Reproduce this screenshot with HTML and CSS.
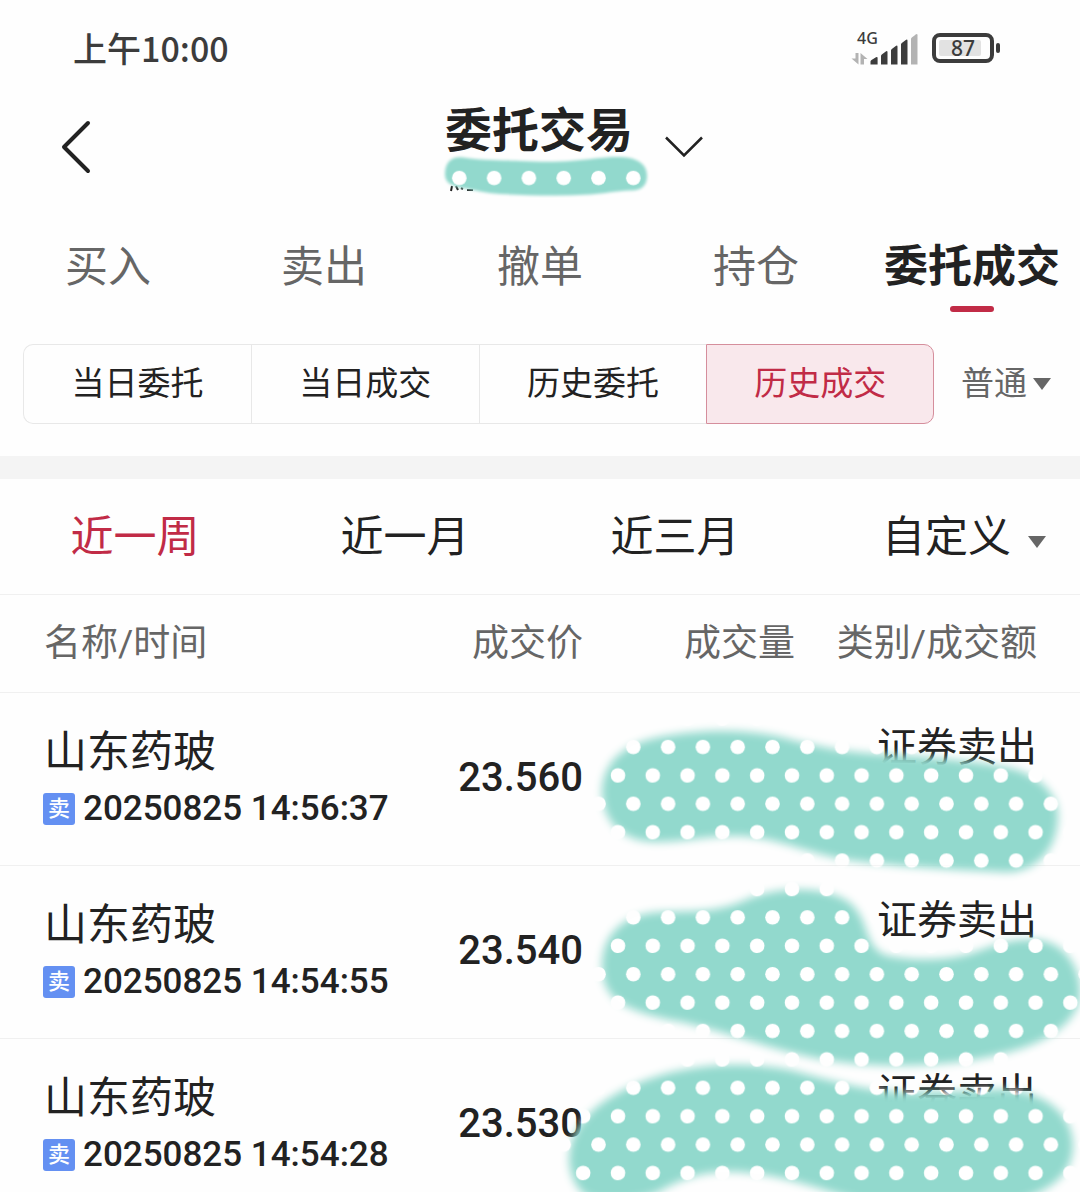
FILE: index.html
```html
<!DOCTYPE html>
<html lang="zh-CN">
<head>
<meta charset="utf-8">
<meta name="viewport" content="width=device-width, initial-scale=1">
<title>委托交易</title>
<link rel="stylesheet" href="styles.css">
</head>
<body>
<div class="status-bar">
  <span class="clock">上午10:00</span>
  <div class="status-icons">
    <svg class="signal" width="68" height="48" viewBox="851 23 68 48" aria-label="4G">
      <text class="network" x="857" y="43">4G</text>
      <path fill="#b3b3b3" d="M855.500 52h3v11.500l-7-6h4zM860.500 63.500v-11.500l7 6h-3.500v5.500z"/>
      <path fill="#3c3c3c" d="M870.500 60.500q0-1 1-1.600l4.500-2.700q1.600-.8 1.600.8v6.500h-7.100zM881 55q0-1 .8-1.600l4-3q1.700-.9 1.700.8v12.300h-6.500zM891 49.500q0-1 .8-1.600l4-3q1.700-.9 1.700.8v17.800h-6.500zM901 43.500q0-1 .8-1.600l4-3q1.700-.9 1.700.8v23.800h-6.500z"/>
      <path fill="#b3b3b3" d="M911 38q0-1 .8-1.600l4-3q1.700-.9 1.700.8v29.300h-6.500z"/>
    </svg>
    <svg class="battery" width="68" height="30" viewBox="932 33 68 30" aria-label="电量 87">
      <rect x="934" y="35" width="58" height="26" rx="6" fill="none" stroke="#3c3c3c" stroke-width="4"/>
      <rect x="939" y="40" width="42" height="16" rx="2" fill="#e2e2e2"/>
      <rect x="996" y="43" width="4" height="10" rx="2" fill="#3c3c3c"/>
      <text class="level" x="963" y="56" text-anchor="middle">87</text>
    </svg>
  </div>
</div>

<header class="app-bar">
  <button class="back" type="button" aria-label="返回">
    <svg width="32" height="54" viewBox="0 0 32 54"><path d="M28 3 4 27l24 24" fill="none" stroke="#222" stroke-width="4" stroke-linecap="round" stroke-linejoin="round"/></svg>
  </button>
  <button class="account" type="button">
    <span class="account-text">
      <span class="account-title">委托交易</span>
      <svg class="account-mask" width="212" height="44" viewBox="440 154 212 44" aria-hidden="true">
        <defs>
          <pattern id="dots-a" patternUnits="userSpaceOnUse" x="441.900" y="163.800" width="34.800" height="56.800">
            <rect width="35" height="57" fill="#92d9cd"/>
            <circle cx="17.400" cy="14.200" r="7.300" fill="#fff"/>
          </pattern>
          <filter id="soft-a"><feGaussianBlur stdDeviation="1.500"/></filter>
          <mask id="stroke-a" maskUnits="userSpaceOnUse" x="440" y="152" width="212" height="48">
            <path filter="url(#soft-a)" fill="#fff" d="M445 174C445 162 452 156 463 157.500C485 161 505 160 520 161C555 163 575 161 595 158.500C610 157 620 156 632 158.500C643 162 647 168 647 176C647 186 641 191 630 190.500C615 191 605 193.500 590 194.500C560 196.500 530 195.500 500 194C485 193 475 190 463 188C450 186 445 182 445 174Z"/>
          </mask>
        </defs>
        <path d="M452 186l-1 5M456 186l2 4M461 188l2 1M467 190h6" fill="none" stroke="#222" stroke-width="2"/>
        <rect x="440" y="152" width="212" height="48" fill="url(#dots-a)" mask="url(#stroke-a)"/>
      </svg>
    </span>
    <svg class="account-arrow" width="38" height="22" viewBox="0 0 38 22"><path d="M1 1.500 19 19.500 37 1.500" fill="none" stroke="#222" stroke-width="2.500"/></svg>
  </button>
</header>

<nav class="tabs">
  <button class="tab" type="button">买入</button>
  <button class="tab" type="button">卖出</button>
  <button class="tab" type="button">撤单</button>
  <button class="tab" type="button">持仓</button>
  <button class="tab tab-active" type="button" aria-current="page">委托成交</button>
</nav>

<div class="filters">
  <div class="segments">
    <button class="segment" type="button">当日委托</button>
    <button class="segment" type="button">当日成交</button>
    <button class="segment" type="button">历史委托</button>
    <button class="segment segment-active" type="button">历史成交</button>
  </div>
  <label class="kind">
    <select class="kind-select" aria-label="账户类型"><option>普通</option></select>
    <span class="caret"></span>
  </label>
</div>

<main class="records">
  <div class="ranges">
    <button class="range range-active" type="button">近一周</button>
    <button class="range" type="button">近一月</button>
    <button class="range" type="button">近三月</button>
    <button class="range range-custom" type="button">自定义<span class="caret caret-low"></span></button>
  </div>

  <div class="table-wrap">
    <table class="deals">
      <colgroup><col class="col-name"><col class="col-price"><col class="col-volume"><col class="col-amount"></colgroup>
      <thead>
        <tr><th scope="col">名称/时间</th><th scope="col">成交价</th><th scope="col">成交量</th><th scope="col">类别/成交额</th></tr>
      </thead>
      <tbody>
        <tr>
          <td class="name-cell"><div class="name">山东药玻</div><div class="time"><span class="badge">卖</span>20250825 14:56:37</div></td>
          <td class="price">23.560</td><td></td><td class="kind-cell">证券卖出</td>
        </tr>
        <tr>
          <td class="name-cell"><div class="name">山东药玻</div><div class="time"><span class="badge">卖</span>20250825 14:54:55</div></td>
          <td class="price">23.540</td><td></td><td class="kind-cell">证券卖出</td>
        </tr>
        <tr>
          <td class="name-cell"><div class="name">山东药玻</div><div class="time"><span class="badge">卖</span>20250825 14:54:28</div></td>
          <td class="price">23.530</td><td></td><td class="kind-cell">证券卖出</td>
        </tr>
      </tbody>
    </table>
    <svg class="amount-mask" width="540" height="492" viewBox="540 701 540 492" aria-hidden="true">
      <defs>
        <pattern id="dots-b" patternUnits="userSpaceOnUse" x="615.900" y="732.800" width="34.800" height="56.800">
          <rect width="35" height="57" fill="#92d9cd"/>
          <circle cx="17.400" cy="14.200" r="7.300" fill="#fff"/>
          <circle cx="2.100" cy="42.600" r="7.300" fill="#fff"/>
          <circle cx="36.900" cy="42.600" r="7.300" fill="#fff"/>
        </pattern>
        <filter id="soft-b" x="-10%" y="-10%" width="120%" height="120%"><feGaussianBlur stdDeviation="4"/></filter>
        <mask id="stroke-b" maskUnits="userSpaceOnUse" x="540" y="700" width="540" height="500">
          <g filter="url(#soft-b)" fill="#fff">
            <path d="M602 790C604 757 630 742 665 736C700 730 745 728 785 738C830 750 860 754 900 755C950 759 980 762 1010 768C1040 775 1058 795 1058 815C1058 850 1035 875 1000 872C950 870 880 865 840 859C800 850 775 838 740 836C710 835 685 842 655 842C620 841 602 820 602 790Z"/>
            <path d="M602 965C603 932 625 914 660 912C700 911 720 912 750 898C780 887 825 885 850 903C870 920 863 945 885 955C910 961 950 961 975 952C1000 943 1015 938 1040 940C1070 945 1082 975 1080 995C1078 1025 1040 1045 1005 1053C950 1068 870 1070 810 1057C760 1046 710 1026 670 1020C625 1010 602 1000 602 965Z"/>
            <path d="M570 1150C574 1122 600 1100 632 1086C680 1064 740 1060 790 1070C830 1080 860 1090 900 1092C940 1093 970 1090 1000 1089C1045 1090 1073 1115 1073 1145C1073 1175 1050 1190 1020 1200L860 1200C820 1190 790 1177 750 1173C710 1169 690 1176 665 1188C650 1200 600 1205 585 1195C572 1185 567 1165 570 1150Z"/>
          </g>
        </mask>
      </defs>
      <rect x="540" y="700" width="540" height="500" fill="url(#dots-b)" mask="url(#stroke-b)"/>
    </svg>
  </div>
</main>
</body>
</html>
```
FILE: styles.css
```css
* {
  box-sizing: border-box;
}

body {
  margin: 0;
  background: #fefefe;
  color: #222;
  font-family: Roboto, "Noto Sans CJK SC", sans-serif;
}

button,
select {
  margin: 0;
  padding: 0;
  border: 0;
  background: none;
  color: inherit;
  font: inherit;
}

svg {
  display: block;
}

/* Status bar */
.status-bar {
  display: flex;
  align-items: center;
  justify-content: space-between;
  height: 96px;
  padding: 0 80px 0 73px;
}

.clock {
  color: #3c3c3c;
  font: 500 34px/48px "Noto Sans CJK SC", sans-serif;
}

.status-icons {
  display: flex;
  align-items: center;
  gap: 13px;
}

.network {
  fill: #3c3c3c;
  font: 500 16px "Noto Sans", sans-serif;
}

.level {
  fill: #3c3c3c;
  font: 500 21px "Noto Sans", sans-serif;
}

/* Title bar */
.app-bar {
  display: grid;
  grid-template-columns: 1fr auto 1fr;
  align-items: center;
  height: 102px;
  padding: 0 60px;
}

.back {
  justify-self: start;
}

.account {
  display: flex;
  align-items: center;
  gap: 13px;
  padding-left: 63px;
}

.account-text {
  display: flex;
  flex-direction: column;
  padding-top: 12px;
}

.account-title {
  padding-left: 5px;
  font-size: 47px;
  font-weight: 700;
  line-height: 46px;
  text-align: left;
}

/* Tabs */
.tabs {
  display: grid;
  grid-template-columns: repeat(5, 1fr);
}

.tab {
  display: flex;
  flex-direction: column;
  align-items: center;
  height: 114px;
  padding-top: 37px;
  color: #666;
  font-size: 43px;
  line-height: 64px;
  white-space: nowrap;
}

.tab-active {
  color: #222;
  font-size: 44px;
  font-weight: 700;
}

.tab-active::after {
  content: "";
  width: 44px;
  height: 6px;
  margin-top: 7px;
  border-radius: 3px;
  background: #c12b46;
}

/* Filters */
.filters {
  display: flex;
  align-items: center;
  gap: 27px;
  padding: 32px 29px 32px 23px;
  border-bottom: 23px solid #f4f4f4;
}

.segments {
  display: grid;
  flex: 1;
  grid-template-columns: repeat(4, 1fr);
}

.segment {
  height: 80px;
  padding-bottom: 7px;
  border: 1px solid #e8e8e8;
  border-right-width: 0;
  font-size: 33px;
}

.segment:first-child {
  border-radius: 10px 0 0 10px;
}

.segment-active {
  border: 1px solid #d58e9c;
  border-radius: 0 10px 10px 0;
  background: #f9e8ec;
  color: #c12b46;
}

.kind {
  display: flex;
  align-items: center;
  gap: 6px;
  color: #666;
}

.kind-select {
  appearance: none;
  font-size: 33px;
  line-height: 48px;
}

.caret {
  border: 9px solid transparent;
  border-top: 12px solid #666;
  border-bottom-width: 0;
}

/* Date ranges */
.ranges {
  display: grid;
  grid-template-columns: repeat(4, 1fr);
  border-bottom: 1px solid #f0f0f0;
}

.range {
  height: 115px;
  padding-bottom: 7px;
  font-size: 43px;
}

.range-active {
  color: #c12b46;
}

.range-custom {
  display: flex;
  align-items: center;
  justify-content: flex-end;
  gap: 17px;
  padding-right: 34px;
}

.caret-low {
  margin-top: 18px;
}

/* Deals */
.table-wrap {
  position: relative;
}

.deals {
  width: 100%;
  border-collapse: collapse;
  table-layout: fixed;
}

.col-price {
  width: 160px;
}

.col-volume {
  width: 212px;
}

.col-amount {
  width: 285px;
}

.deals th {
  height: 97px;
  padding: 0 0 6px;
  border-bottom: 1px solid #f0f0f0;
  color: #666;
  font-size: 37px;
  font-weight: 400;
  text-align: right;
}

.deals th:first-child {
  padding-left: 44px;
  text-align: left;
}

.deals th:last-child {
  padding-right: 43px;
}

.deals td {
  padding: 0 0 28px;
  border-bottom: 1px solid #f0f0f0;
  line-height: 56px;
  text-align: right;
  vertical-align: top;
}

.deals tr:last-child td {
  padding-bottom: 10px;
  border-bottom: 0;
}

.deals .name-cell {
  padding-top: 31px;
  padding-left: 43px;
  text-align: left;
}

.name {
  padding-left: 1px;
  font-size: 43px;
  line-height: 57px;
}

.time {
  display: flex;
  align-items: center;
  gap: 8px;
  font-size: 35px;
  font-weight: 500;
  white-space: nowrap;
}

.badge {
  width: 32px;
  height: 32px;
  border-radius: 3px;
  background: #6490f2;
  color: #fff;
  font-size: 22px;
  line-height: 32px;
  text-align: center;
}

.deals .price {
  padding-top: 57px;
  font-size: 40px;
  font-weight: 500;
}

.deals .kind-cell {
  padding-top: 27px;
  padding-right: 43px;
  font-size: 40px;
}

.account-mask,
.amount-mask {
  pointer-events: none;
}

.amount-mask {
  position: absolute;
  right: 0;
  bottom: 0;
}
```
